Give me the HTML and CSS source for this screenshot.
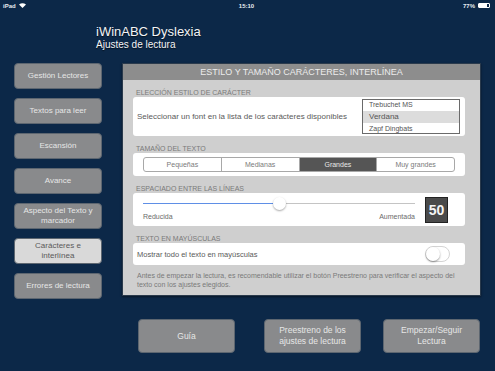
FILE: index.html
```html
<!DOCTYPE html>
<html>
<head>
  <title>iWinABC Dyslexia - Ajustes de lectura</title>
  <link rel="stylesheet" href="styles.css">
</head>
<body>

  <div class="status-bar">
    <span class="status-left">iPad
      <svg width="7" height="5" viewBox="0 0 7 5"><path d="M0 1.5 Q3.5 -1 7 1.5 L3.5 5 Z" fill="#fff"/></svg>
    </span>
    <span class="status-time">15:10</span>
    <span class="status-right">77%
      <span class="battery"><span class="battery-level"></span></span>
    </span>
  </div>

  <div class="header">
    <div class="app-title">iWinABC Dyslexia</div>
    <div class="app-subtitle">Ajustes de lectura</div>
  </div>

  <div class="main">
    <div class="sidebar">
      <button class="side-btn">Gestión Lectores</button>
      <button class="side-btn">Textos para leer</button>
      <button class="side-btn">Escansión</button>
      <button class="side-btn">Avance</button>
      <button class="side-btn">Aspecto del Texto y marcador</button>
      <button class="side-btn active">Carácteres e interlínea</button>
      <button class="side-btn">Errores de lectura</button>
    </div>

    <div class="panel">
      <div class="panel-title">ESTILO Y TAMAÑO CARÁCTERES, INTERLÍNEA</div>

      <div class="section">
        <div class="section-label">ELECCIÓN ESTILO DE CARÁCTER</div>
        <div class="card card-font">
          <span>Seleccionar un font en la lista de los carácteres disponibles</span>
          <div class="font-list">
            <div class="font-item">Trebuchet MS</div>
            <div class="font-item selected">Verdana</div>
            <div class="font-item">Zapf Dingbats</div>
          </div>
        </div>
      </div>

      <div class="section">
        <div class="section-label">TAMAÑO DEL TEXTO</div>
        <div class="card card-size">
          <div class="segmented">
            <div class="segment">Pequeñas</div>
            <div class="segment">Medianas</div>
            <div class="segment selected">Grandes</div>
            <div class="segment">Muy grandes</div>
          </div>
        </div>
      </div>

      <div class="section">
        <div class="section-label">ESPACIADO ENTRE LAS LÍNEAS</div>
        <div class="card card-spacing">
          <div class="slider-wrap">
            <div class="slider">
              <div class="slider-fill" style="width: 50%"></div>
              <div class="slider-thumb" style="left: 50%"></div>
            </div>
            <div class="slider-labels">
              <span>Reducida</span>
              <span>Aumentada</span>
            </div>
          </div>
          <div class="value-box">50</div>
        </div>
      </div>

      <div class="section">
        <div class="section-label">TEXTO EN MAYÚSCULAS</div>
        <div class="card card-caps">
          <span>Mostrar todo el texto en mayúsculas</span>
          <div class="toggle"><div class="toggle-knob"></div></div>
        </div>
      </div>

      <p class="note">Antes de empezar la lectura, es recomendable utilizar el botón Preestreno para verificar el aspecto del texto con los ajustes elegidos.</p>
    </div>
  </div>

  <div class="footer">
    <button class="foot-btn">Guía</button>
    <button class="foot-btn btn-preview">Preestreno de los ajustes de lectura</button>
    <button class="foot-btn btn-start">Empezar/Seguir Lectura</button>
  </div>

</body>
</html>
```

FILE: styles.css
```css
body {
  font-family: "Liberation Sans", Arial, sans-serif;
  background-color: #0c2848;
  margin: 0;
  width: 495px;
  height: 371px;
  overflow: hidden;
}

/* iOS status bar */
.status-bar {
  display: flex;
  justify-content: space-between;
  align-items: center;
  height: 11px;
  padding: 0 5px 0 3px;
  font-size: 6px;
  font-weight: bold;
  color: #e8ecf0;
}

.status-left, .status-right {
  display: flex;
  align-items: center;
  gap: 3px;
  width: 60px;
}

.status-right {
  justify-content: flex-end;
}

.battery {
  display: inline-block;
  width: 12px;
  height: 5px;
  border: 1px solid #fff;
  border-radius: 1px;
  box-sizing: border-box;
}

.battery-level {
  display: block;
  width: 8px;
  height: 3px;
  background: #fff;
}

.header {
  padding: 13px 0 0 96px;
  height: 39px;
  color: #f2f4f6;
  text-shadow: 0 1px 1px rgba(0,0,0,0.6);
}

.app-title {
  font-size: 13px;
  line-height: 15px;
}

.app-subtitle {
  font-size: 10px;
  line-height: 11px;
}

.main {
  display: flex;
  padding-left: 14px;
}

.sidebar {
  display: flex;
  flex-direction: column;
  gap: 9px;
  width: 88px;
}

.side-btn, .foot-btn {
  font-family: "Liberation Sans", Arial, sans-serif;
  background-color: #898a8c;
  color: #e6e6e6;
  border: 1px solid #5d6670;
  border-radius: 4px;
  font-size: 8px;
  line-height: 10px;
  padding: 0 3px;
  text-align: center;
}

.side-btn {
  height: 26px;
}

.side-btn.active {
  background-color: #d9d9d9;
  color: #5a5a5a;
}

.panel {
  width: 359px;
  height: 233px;
  margin-left: 20px;
  background-color: #cfcfcf;
  border: 1px solid #2a3a4c;
  box-sizing: border-box;
  padding: 0 15px 0 10px;
  box-shadow: 0 1px 2px rgba(0,0,0,0.5);
}

.panel-title {
  background-color: #8d8d8d;
  color: #ececec;
  text-align: center;
  font-size: 9px;
  line-height: 16px;
  height: 16px;
  margin: 0 -15px 0 -10px;
}

.section {
  margin-top: 4px;
}

.section-label {
  padding: 4px 0 0 3px;
  font-size: 7px;
  line-height: 9px;
  color: #7a7a7a;
}

.card {
  background-color: #fff;
  border-radius: 3px;
  font-size: 8px;
  color: #5a5a5a;
}

.card-font {
  display: flex;
  align-items: center;
  justify-content: space-between;
  height: 39px;
  padding: 0 5px 0 4px;
}

.font-list {
  width: 98px;
  height: 35px;
  border: 1px solid #6a6a6a;
  box-sizing: border-box;
  overflow: hidden;
  display: flex;
  flex-direction: column;
  justify-content: center;
}

.font-item {
  font-size: 7px;
  line-height: 12px;
  padding-left: 6px;
  color: #555;
}

.font-item.selected {
  background-color: #dcdcdc;
  font-size: 8px;
}

.card-size {
  height: 23px;
  padding: 4px 10px 0 10px;
  box-sizing: border-box;
}

.segmented {
  display: flex;
  height: 15px;
  border: 1px solid #a8a8a8;
  border-radius: 3px;
  box-sizing: border-box;
  overflow: hidden;
}

.segment {
  flex: 1;
  text-align: center;
  font-size: 7px;
  line-height: 13px;
  color: #7a7a7a;
  border-left: 1px solid #a8a8a8;
}

.segment:first-child {
  border-left: none;
}

.segment.selected {
  background-color: #555;
  color: #e8e8e8;
}

.card-spacing {
  display: flex;
  align-items: center;
  height: 33px;
  padding: 0 17px 0 10px;
  box-sizing: border-box;
}

.slider-wrap {
  width: 272px;
  padding-top: 4px;
}

.slider {
  position: relative;
  height: 1px;
  background-color: #c4c4c4;
}

.slider-fill {
  height: 1px;
  background-color: #5f8fe6;
}

.slider-thumb {
  position: absolute;
  top: -6px;
  width: 13px;
  height: 13px;
  margin-left: -6px;
  border-radius: 50%;
  background: #fff;
  box-shadow: 0 1px 2px rgba(0,0,0,0.35);
}

.slider-labels {
  display: flex;
  justify-content: space-between;
  font-size: 7px;
  color: #6a6a6a;
  margin-top: 9px;
}

.value-box {
  margin-left: auto;
  width: 23px;
  height: 26px;
  background-color: #4a4a4a;
  border: 1px solid #222;
  box-sizing: border-box;
  color: #f4f4f4;
  font-size: 14px;
  font-weight: bold;
  line-height: 24px;
  text-align: center;
}

.card-caps {
  display: flex;
  align-items: center;
  justify-content: space-between;
  height: 22px;
  padding: 0 15px 0 4px;
  font-size: 7.5px;
}

.toggle {
  width: 25px;
  height: 16px;
  border: 1px solid #d4d4d4;
  border-radius: 8px;
  box-sizing: border-box;
  background: #fff;
}

.toggle-knob {
  width: 14px;
  height: 14px;
  border-radius: 50%;
  background: #fff;
  box-shadow: 0 1px 2px rgba(0,0,0,0.4);
}

.note {
  margin: 6px 0 0 4px;
  font-size: 7px;
  line-height: 9px;
  color: #7a7a7a;
}

.footer {
  display: flex;
  padding: 20px 0 0 138px;
}

.foot-btn {
  width: 97px;
  height: 34px;
  font-size: 8.5px;
  line-height: 11px;
  padding: 0 10px;
}

.btn-preview {
  margin-left: 29px;
}

.btn-start {
  margin-left: 22px;
}
```
